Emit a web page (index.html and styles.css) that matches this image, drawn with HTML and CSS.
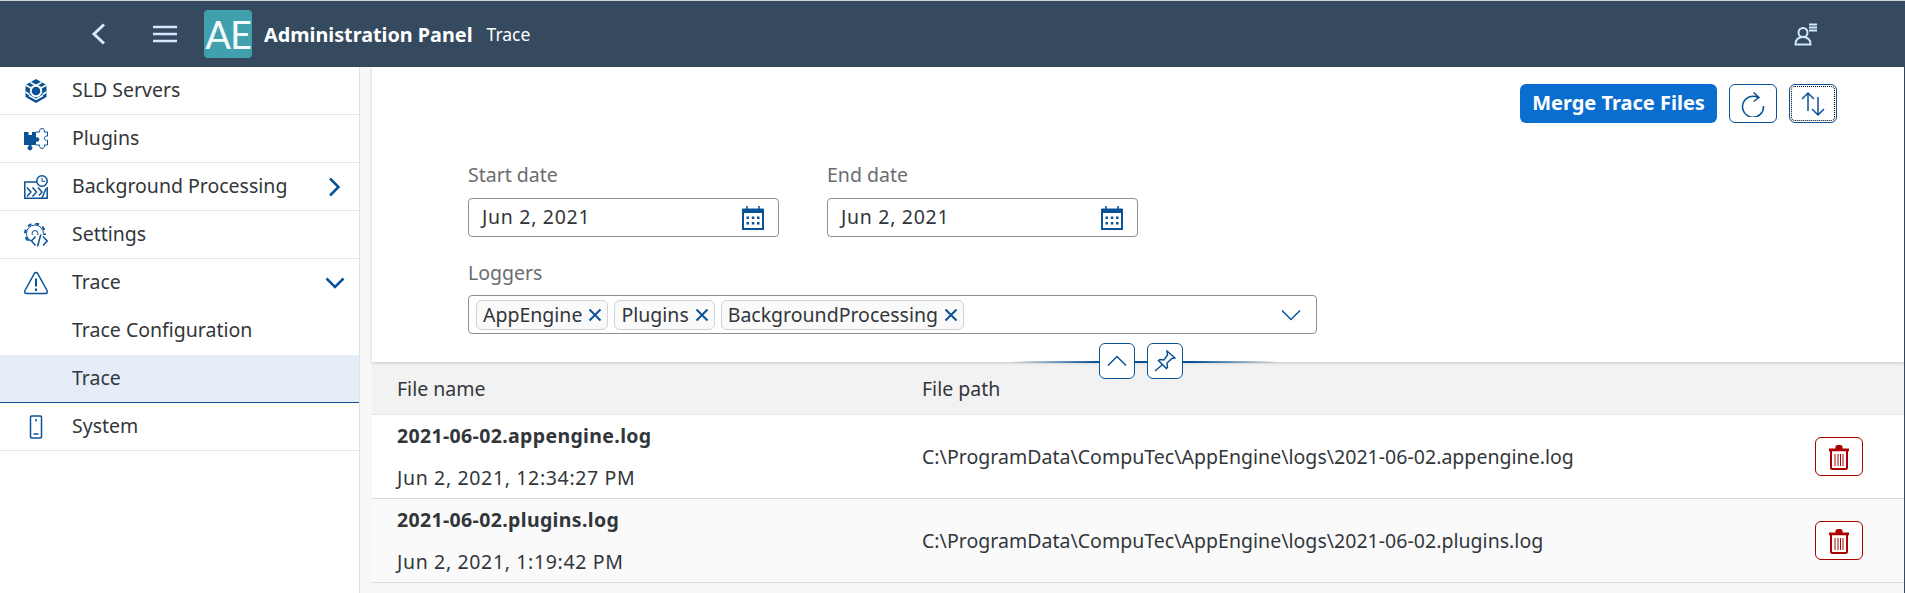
FILE: index.html
```html
<!DOCTYPE html>
<html lang="en">
<head>
<meta charset="utf-8">
<title>Administration Panel</title>
<link rel="stylesheet" href="styles.css">
</head>
<body>
<header class="shell-bar">
  <button class="bar-btn back" aria-label="Back"><svg width="16" height="22" viewBox="0 0 16 22"><path d="M13 1.500 3 11l10 9.500" class="s-light w3"/></svg></button>
  <button class="bar-btn menu" aria-label="Menu"><svg width="26" height="18" viewBox="0 0 26 18"><path d="M1 2h24M1 9h24M1 16h24" class="s-light w25"/></svg></button>
  <div class="logo">AE</div>
  <div class="title">Administration Panel</div>
  <div class="subtitle">Trace</div>
  <button class="bar-btn user" aria-label="User"><svg width="24" height="24" viewBox="0 0 24 24"><circle cx="9" cy="10.500" r="4.500" class="s-light w2"/><path d="M1.500 22.500c0-5 3-7.500 7.500-7.500s7.500 2.500 7.500 7.500z" class="s-light w2"/><path d="M15 2.500h8M15 5.500h8M15 8.500h8" class="s-light w2"/></svg></button>
</header>
<div class="layout">
  <nav class="side">
    <div class="nav-row">
      <svg class="nav-icon" viewBox="0 0 24 24"><path d="M12 0 22.500 6v12L12 24 1.500 18V6z" class="f-blue"/><path d="M6.500 3.500 12 6.500l5.500-3M1.500 6 7 9M22.500 6 17 9M1.500 13l4 2.500M22.500 13l-4 2.500M5 16.500l7 4 7-4" class="s-white w15"/><circle cx="12" cy="12" r="6.200" class="f-white"/><circle cx="12" cy="12" r="4.300" class="f-blue"/></svg>
      <span>SLD Servers</span>
    </div>
    <div class="nav-row">
      <svg class="nav-icon" viewBox="0 0 24 24"><path d="M0 5h4.500v3h3.500V5h4v13H7.400v1.200a2.300 2.300 0 1 1-2.800 0V18H0z" class="f-blue"/><path d="M12 5h3.700a2.500 2.500 0 1 1 4.600 0h3.200v4.200a2.200 2.200 0 1 0 0 4V18h-3.200a2.500 2.500 0 1 1-4.600 0H12" class="s-blue w1"/><circle cx="13" cy="12.500" r="2.300" class="f-blue"/></svg>
      <span>Plugins</span>
    </div>
    <div class="nav-row">
      <svg class="nav-icon" viewBox="0 0 24 24"><path d="M13 7H.800v16.300h22.400V12" class="s-blue w15"/><path d="M3 12.500l4 4.500-4 4.500M8.500 12.500l4 4.500-4 4.500M14 12.500l4 4.500-3 3.500M22 13.500 18 23" class="s-blue w15"/><circle cx="18" cy="6" r="5.200" class="s-blue w15 f-white"/><path d="M18 2.800v3.500h3.200" class="s-blue w1"/></svg>
      <span>Background Processing</span>
      <svg class="nav-chev" width="14" height="20" viewBox="0 0 14 20"><path d="M3 1.500 11.500 10 3 18.500" class="s-blue w25"/></svg>
    </div>
    <div class="nav-row">
      <svg class="nav-icon" viewBox="0 0 24 24"><circle cx="11" cy="10.500" r="10" class="teeth"/><circle cx="11" cy="10.500" r="8.500" class="s-blue w1"/><circle cx="11" cy="10.500" r="3" class="s-blue w1"/><path d="M6.500 12H24v12H6.500z" class="f-white"/><path d="M2.500 15.500l2.500 2 2-.5" class="s-blue w1"/><path d="M11.500 13.500 7.500 18l4 4.500M19 13.500l4.200 4.500-4.200 4.500M16.800 11.500 13.500 23.500" class="s-blue w15"/></svg>
      <span>Settings</span>
    </div>
    <div class="nav-row flat">
      <svg class="nav-icon" viewBox="0 0 24 24"><path d="M12 1.500c.7 0 1.200.4 1.600 1L23 19.500c1 1.800 0 3-1.500 3h-19c-1.500 0-2.500-1.200-1.500-3L10.400 2.500c.4-.6.900-1 1.600-1z" class="s-blue w15"/><path d="M12 7.500v8M12 17.500v2.500" class="s-blue w2"/></svg>
      <span>Trace</span>
      <svg class="nav-chev down" width="20" height="12" viewBox="0 0 20 12"><path d="M1.500 1.500 10 10l8.500-8.500" class="s-blue w25"/></svg>
    </div>
    <div class="nav-row sub flat"><span>Trace Configuration</span></div>
    <div class="nav-row sub selected"><span>Trace</span></div>
    <div class="nav-row">
      <svg class="nav-icon" viewBox="0 0 24 24"><path d="M7.500 1h9a1 1 0 0 1 1 1v20a1 1 0 0 1-1 1h-9a1 1 0 0 1-1-1V2a1 1 0 0 1 1-1z" class="s-blue w15"/><path d="M12 4v2.500M9.500 19h5" class="s-blue w15"/></svg>
      <span>System</span>
    </div>
  </nav>
  <main class="content">
    <section class="filters">
      <div class="toolbar">
        <button class="btn-primary"><span>Merge Trace Files</span></button>
        <button class="btn-icon" aria-label="Refresh"><svg width="24" height="26" viewBox="0 0 24 26"><path d="M17 6.500A10.500 10.500 0 1 0 22.500 15" class="s-blue w15"/><path d="M12.500 1.500 18 6.500l-5.500 4" class="s-blue w15"/></svg></button>
        <button class="btn-icon focused" aria-label="Sort"><svg width="26" height="26" viewBox="0 0 26 26"><path d="M8 20V2M2 8l6-6 6 6M18 6v18M12 18l6 6 6-6" class="s-blue w15"/></svg></button>
      </div>
      <div class="form">
        <div class="date-row">
          <div class="field">
            <label class="field-label">Start date</label>
            <div class="input date"><span>Jun 2, 2021</span>
              <svg class="cal" width="22" height="25" viewBox="0 0 22 25"><use href="#cal"/></svg></div>
          </div>
          <div class="field">
            <label class="field-label">End date</label>
            <div class="input date"><span>Jun 2, 2021</span>
              <svg class="cal" width="22" height="25" viewBox="0 0 22 25"><use href="#cal"/></svg></div>
          </div>
        </div>
        <div class="field loggers">
          <label class="field-label">Loggers</label>
          <div class="input multi">
            <span class="chip">AppEngine<svg width="14" height="14" viewBox="0 0 14 14"><path d="M1.500 1.500l11 11M12.500 1.500l-11 11" class="s-blue w2"/></svg></span>
            <span class="chip">Plugins<svg width="14" height="14" viewBox="0 0 14 14"><path d="M1.500 1.500l11 11M12.500 1.500l-11 11" class="s-blue w2"/></svg></span>
            <span class="chip">BackgroundProcessing<svg width="14" height="14" viewBox="0 0 14 14"><path d="M1.500 1.500l11 11M12.500 1.500l-11 11" class="s-blue w2"/></svg></span>
            <svg class="multi-chev" width="20" height="12" viewBox="0 0 20 12"><path d="M1 1.500l9 9 9-9" class="s-blue w15"/></svg>
          </div>
        </div>
      </div>
      <div class="collapse-bar">
        <button class="btn-mini" aria-label="Collapse"><svg width="20" height="12" viewBox="0 0 20 12"><path d="M1 10.500l9-9 9 9" class="s-blue w15"/></svg></button>
        <button class="btn-mini" aria-label="Pin"><svg width="22" height="22" viewBox="0 0 22 22"><path d="M13 1l8 7-3 .5-5 4.500.5 4-1 1.500L4.500 10.500 6 9.500l4 .5 3.500-5zM8 15l-7 6" class="s-blue w15"/></svg></button>
      </div>
    </section>
    <div class="table">
      <div class="t-row t-head"><div>File name</div><div>File path</div><div></div></div>
      <div class="t-row">
        <div><div class="file-name">2021-06-02.appengine.log</div><div class="file-date">Jun 2, 2021, 12:34:27 PM</div></div>
        <div class="file-path">C:\ProgramData\CompuTec\AppEngine\logs\2021-06-02.appengine.log</div>
        <button class="btn-del" aria-label="Delete"><svg width="22" height="26" viewBox="0 0 22 26"><use href="#trash"/></svg></button>
      </div>
      <div class="t-row alt">
        <div><div class="file-name">2021-06-02.plugins.log</div><div class="file-date">Jun 2, 2021, 1:19:42 PM</div></div>
        <div class="file-path">C:\ProgramData\CompuTec\AppEngine\logs\2021-06-02.plugins.log</div>
        <button class="btn-del" aria-label="Delete"><svg width="22" height="26" viewBox="0 0 22 26"><use href="#trash"/></svg></button>
      </div>
    </div>
  </main>
</div>
<svg class="defs" width="0" height="0">
  <symbol id="cal" viewBox="0 0 22 25">
    <path d="M1 5h20v19H1z" class="s-blue w2"/><path d="M.500 3.500h21V8H.500z" class="f-blue"/>
    <path d="M5 1v4M17 1v4" class="s-blue w15"/>
    <path d="M4.500 11.500h2.500V14h-2.500zM9.800 11.500h2.500V14H9.800zM15 11.500h2.500V14H15zM4.500 17h2.500v2.500h-2.500zM9.800 17h2.500v2.500H9.800zM15 17h2.500v2.500H15z" class="f-blue"/>
  </symbol>
  <symbol id="trash" viewBox="0 0 22 26">
    <path d="M1 4.500h20v2.700H1zM7.500 2.500C7.500 1.500 9 1 11 1s3.500 .5 3.500 1.500V5h-7z" class="f-red"/>
    <path d="M3 7v16.500c0 .8.500 1.500 1.500 1.500h13c1 0 1.500-.7 1.500-1.500V7" class="s-red w2"/>
    <path d="M7 10v12M10 10v12M12.500 10v12M15 10v12" class="s-red w1"/>
  </symbol>
</svg>
</body>
</html>
```
FILE: styles.css
```css
* { box-sizing: border-box; }
html, body { margin: 0; padding: 0; height: 593px; overflow: hidden; }
body {
  background: #f7f7f7;
  color: #32363a;
  font-family: "Noto Sans", "Open Sans", sans-serif;
  font-size: 19.5px;
}
button { font: inherit; padding: 0; margin: 0; background: none; border: 0; display: flex; align-items: center; justify-content: center; }
svg { display: block; flex: none; }
.defs { position: absolute; }
.s-light { fill: none; stroke: #d1e8ff; }
.s-blue { fill: none; stroke: #0a5296; }
.s-red { fill: none; stroke: #aa0000; }
.s-white { fill: none; stroke: #fff; }
.f-blue { fill: #0a5296; stroke: none; }
.f-red { fill: #aa0000; stroke: none; }
.f-white { fill: #fff; }
.w1 { stroke-width: 1; }
.w15 { stroke-width: 1.5; }
.w2 { stroke-width: 2; }
.w25 { stroke-width: 2.5; }
.w3 { stroke-width: 3; }
.teeth { fill: none; stroke: #0a5296; stroke-width: 2; stroke-dasharray: 3.850 4; }

.shell-bar {
  height: 67px;
  border-top: 1px solid #cfd6dc;
  background: #354a5f;
  display: flex;
  align-items: center;
  color: #fff;
}
.bar-btn.back { margin-left: 91px; }
.bar-btn.menu { margin-left: 45px; }
.logo {
  width: 48px;
  height: 48px;
  margin-left: 26px;
  border-radius: 4px;
  background: #41a0ae;
  color: #f2fafb;
  font-family: "Lato", sans-serif;
  font-weight: 400;
  font-size: 38px;
  line-height: 48px;
  text-align: center;
  letter-spacing: -1px;
}
.title { margin-left: 12px; font-weight: 700; font-size: 19.8px; }
.subtitle { margin-left: 14px; font-size: 17.5px; }
.bar-btn.user { margin-left: auto; margin-right: 87px; }

.layout { display: flex; height: 526px; }
.side {
  width: 360px;
  flex: none;
  background: #fff;
  border-right: 1px solid #e0e0e0;
}
.nav-row {
  height: 48px;
  padding-left: 24px;
  display: flex;
  align-items: center;
  border-bottom: 1px solid #e5e5e5;
  background: #fff;
}
.nav-row span { margin-bottom: 2px; }
.nav-row.flat { border-bottom-color: transparent; }
.nav-row.sub { padding-left: 72px; }
.nav-row.selected { background: #e5eef8; border-bottom-color: #0a5296; }
.nav-icon { width: 24px; height: 24px; margin-right: 24px; }
.nav-chev { margin-left: auto; margin-right: 18px; }
.nav-chev.down { margin-right: 14px; }

.content {
  flex: 1;
  margin-left: 12px;
  border-right: 1px solid #354a5f;
  display: flex;
  flex-direction: column;
}
.filters {
  position: relative;
  height: 295px;
  padding-top: 17px;
  background: #fff;
  box-shadow: 0 1px 3px rgba(0, 0, 0, .18);
}
.toolbar { display: flex; justify-content: flex-end; gap: 12px; padding-right: 67px; }
.btn-primary {
  height: 39px;
  width: 197px;
  border-radius: 6px;
  background: #0a6ed1;
  color: #fff;
  font-weight: 700;
  font-size: 20px;
}
.btn-primary span { margin-bottom: 2px; }
.btn-icon {
  width: 48px;
  height: 39px;
  border: 1px solid #0a5296;
  border-radius: 6px;
  background: #fff;
}
.btn-icon.focused { outline: 1px dotted #000; outline-offset: -3px; }

.form { padding-left: 96px; }
.date-row { display: flex; gap: 48px; margin-top: 41px; }
.field { width: 311px; }
.field-label { display: block; height: 22px; line-height: 22px; color: #6a6d70; margin-bottom: 12px; }
.input {
  height: 39px;
  border: 1px solid #89919a;
  border-radius: 4px;
  background: #fff;
  display: flex;
  align-items: center;
}
.date { padding: 0 14px 0 13px; justify-content: space-between; }
.date span { letter-spacing: .7px; margin-bottom: 2px; }
.loggers { width: 849px; margin-top: 25px; }
.loggers .field-label { margin-bottom: 11px; }
.multi { padding-left: 7px; gap: 6px; }
.chip {
  height: 30px;
  padding: 0 5px 0 6px;
  border: 1px solid #d0d3d6;
  border-radius: 6px;
  background: #fafafa;
  display: flex;
  align-items: center;
  gap: 6px;
}
.multi-chev { margin-left: auto; margin-right: 15px; }

.collapse-bar {
  position: absolute;
  left: 727px;
  bottom: -17px;
  display: flex;
  gap: 12px;
  width: 84px;
}
.collapse-bar::before {
  content: "";
  position: absolute;
  left: -89px;
  width: 270px;
  top: 18px;
  height: 2px;
  background: linear-gradient(90deg, transparent 0, #0a5296 32%, #0a5296 68%, transparent 100%);
}
.btn-mini {
  position: relative;
  width: 36px;
  height: 36px;
  border: 1px solid #0a5296;
  border-radius: 6px;
  background: #fff;
}

.table { display: flex; flex-direction: column; }
.t-row {
  display: grid;
  grid-template-columns: 525px 1fr 48px;
  align-items: center;
  height: 84px;
  padding: 0 41px 0 25px;
  background: #fff;
  border-bottom: 1px solid #dcdcdc;
}
.t-row.alt { background: #fafafa; }
.t-head { height: 53px; background: #f2f2f2; border-bottom-color: #e5e5e5; }
.file-name { font-weight: 700; line-height: 22px; letter-spacing: .35px; }
.file-date { line-height: 22px; margin-top: 20px; letter-spacing: .65px; }
.file-path { letter-spacing: .03px; }
.btn-del {
  width: 48px;
  height: 39px;
  border: 1px solid #aa0000;
  border-radius: 6px;
  background: #fff;
}
```
